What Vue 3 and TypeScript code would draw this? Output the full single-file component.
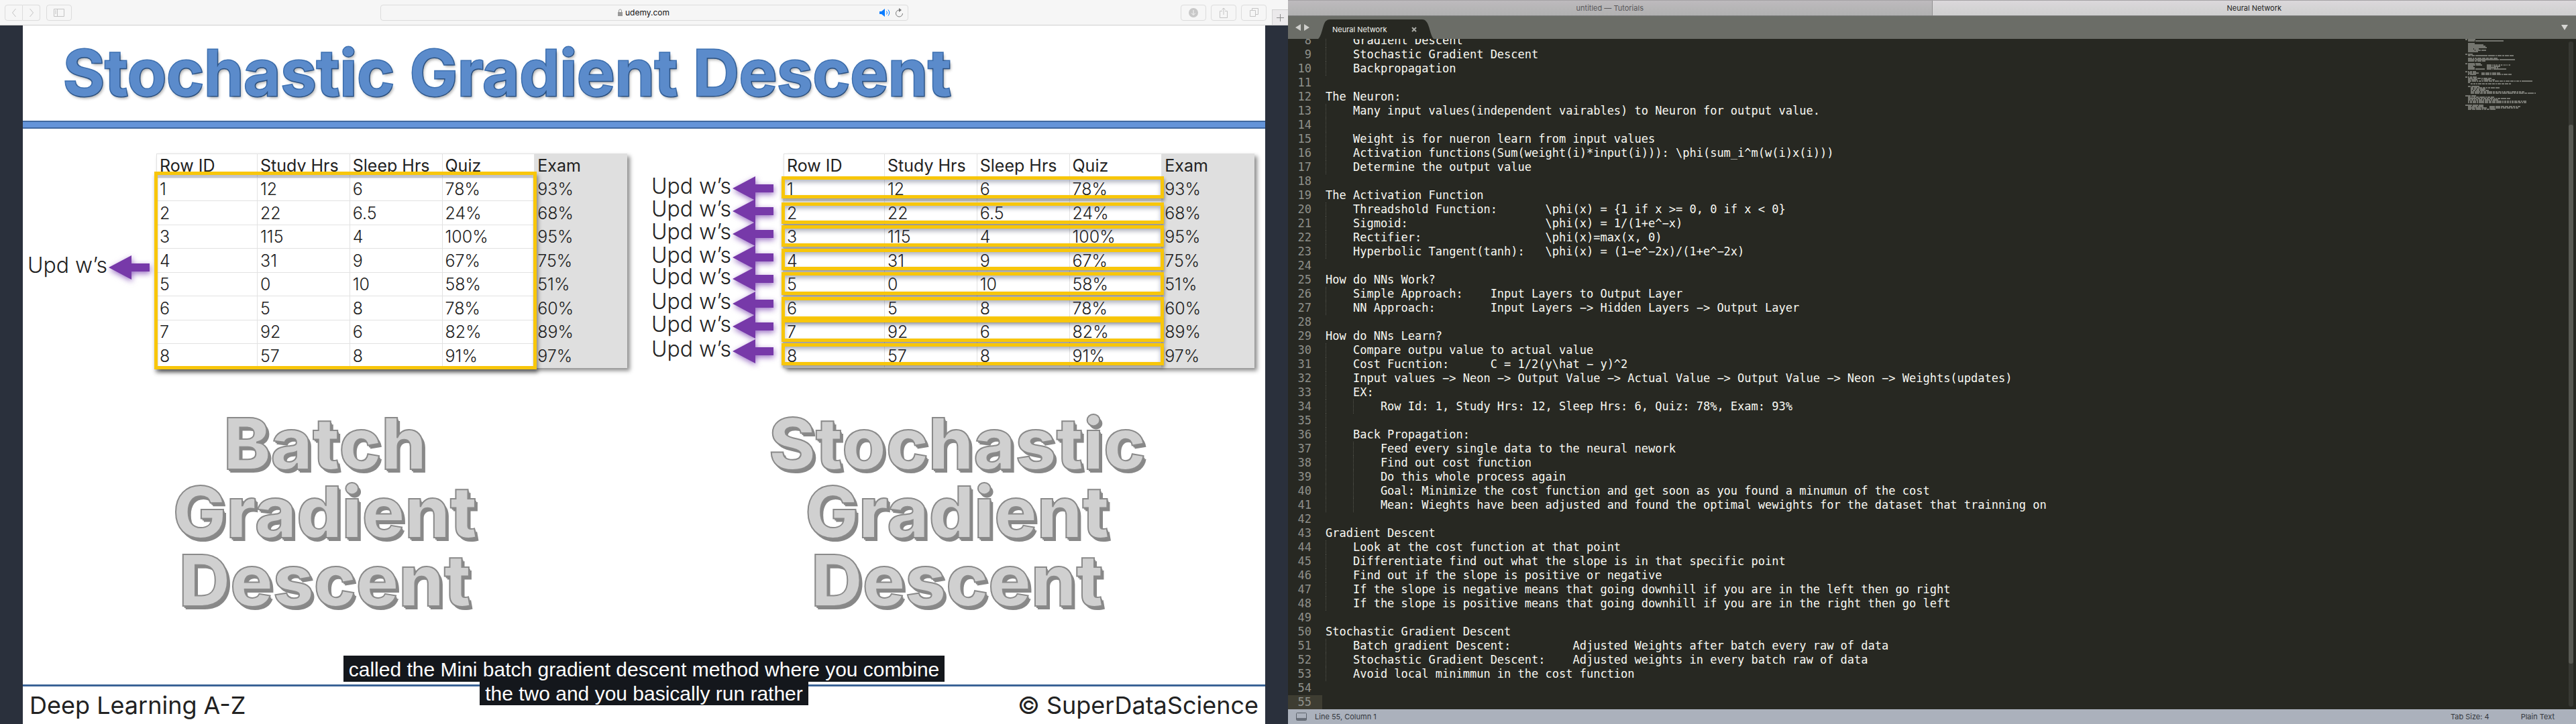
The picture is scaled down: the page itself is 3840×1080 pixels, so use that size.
<script setup lang="ts">
interface Callout { y: number }
interface Highlight { y: number; height: number }
interface Figure {
  name: string
  title: string[]
  callouts: Callout[]
  highlights: Highlight[]
}
interface CodeLine { no: number; guides: number; text: string }
interface Run { x: number; y: number; width: number }

const columns: string[] = ['Row ID', 'Study Hrs', 'Sleep Hrs', 'Quiz', 'Exam']
const rows: string[][] = [
  ['1', '12', '6', '78%', '93%'],
  ['2', '22', '6.5', '24%', '68%'],
  ['3', '115', '4', '100%', '95%'],
  ['4', '31', '9', '67%', '75%'],
  ['5', '0', '10', '58%', '51%'],
  ['6', '5', '8', '78%', '60%'],
  ['7', '92', '6', '82%', '89%'],
  ['8', '57', '8', '91%', '97%'],
]

// Positions are measured from the top of the table on the slide.
const figures: Figure[] = [
  {
    name: 'batch',
    title: ['Batch', 'Gradient', 'Descent'],
    callouts: [{ y: 170 }],
    highlights: [{ y: 27, height: 295 }],
  },
  {
    name: 'stochastic',
    title: ['Stochastic', 'Gradient', 'Descent'],
    callouts: [52, 86, 120, 155, 187, 224, 258, 295].map((y) => ({ y })),
    highlights: [
      { y: 34, height: 33 },
      { y: 73, height: 32 },
      { y: 107, height: 32 },
      { y: 142, height: 32 },
      { y: 177, height: 34 },
      { y: 214, height: 34 },
      { y: 247, height: 34 },
      { y: 283, height: 33 },
    ],
  },
]

const source = `    Gradient Descent
    Stochastic Gradient Descent
    Backpropagation

The Neuron:
    Many input values(independent vairables) to Neuron for output value.
    
    Weight is for nueron learn from input values
    Activation functions(Sum(weight(i)*input(i))): \\phi(sum_i^m(w(i)x(i)))
    Determine the output value

The Activation Function
    Threadshold Function:       \\phi(x) = {1 if x >= 0, 0 if x < 0}
    Sigmoid:                    \\phi(x) = 1/(1+e^−x)
    Rectifier:                  \\phi(x)=max(x, 0)
    Hyperbolic Tangent(tanh):   \\phi(x) = (1−e^−2x)/(1+e^−2x)

How do NNs Work?
    Simple Approach:    Input Layers to Output Layer
    NN Approach:        Input Layers −> Hidden Layers −> Output Layer

How do NNs Learn?
    Compare outpu value to actual value
    Cost Fucntion:      C = 1/2(y\\hat − y)^2
    Input values −> Neon −> Output Value −> Actual Value −> Output Value −> Neon −> Weights(updates)
    EX:
        Row Id: 1, Study Hrs: 12, Sleep Hrs: 6, Quiz: 78%, Exam: 93%
    
    Back Propagation:
        Feed every single data to the neural nework
        Find out cost function
        Do this whole process again
        Goal: Minimize the cost function and get soon as you found a minumun of the cost
        Mean: Wieghts have been adjusted and found the optimal wewights for the dataset that trainning on

Gradient Descent
    Look at the cost function at that point
    Differentiate find out what the slope is in that specific point
    Find out if the slope is positive or negative
    If the slope is negative means that going downhill if you are in the left then go right
    If the slope is positive means that going downhill if you are in the right then go left

Stochastic Gradient Descent
    Batch gradient Descent:         Adjusted Weights after batch every raw of data
    Stochastic Gradient Descent:    Adjusted weights in every batch raw of data
    Avoid local minimmun in the cost function

`
const firstLine = 8
const lines: CodeLine[] = source.split('\n').map((raw, i) => {
  const guides = Math.floor((raw.length - raw.trimStart().length) / 4)
  return { no: firstLine + i, guides, text: raw.slice(guides * 4) }
})
const activeLine = 55

// The minimap draws one pixel per character and two pixels per line.
const runsAbove: Run[] = [
  { x: 0, y: 0, width: 3 }, { x: 4, y: 0, width: 11 },
  { x: 4, y: 2, width: 10 }, { x: 15, y: 2, width: 42 },
  { x: 4, y: 6, width: 10 }, { x: 4, y: 8, width: 23 },
  { x: 4, y: 10, width: 26 }, { x: 4, y: 12, width: 28 },
]
const runsBelow: Run[] = source.split('\n').flatMap((raw, i) =>
  [...raw.matchAll(/\S+/g)].map((m) => ({
    x: m.index ?? 0,
    y: (firstLine + i - 1) * 2,
    width: m[0].length,
  })),
)
const runs: Run[] = [...runsAbove, ...runsBelow]
</script>

<template>
  <div class="desktop">
    <section class="browser">
      <header class="toolbar">
        <div class="nav">
          <button type="button" class="tool back" aria-label="Back">
            <svg width="8" height="14" viewBox="0 0 8 14"><path d="M6.500 1 1.500 7l5 6" /></svg>
          </button>
          <button type="button" class="tool forward" aria-label="Forward">
            <svg width="8" height="14" viewBox="0 0 8 14"><path d="m1.500 1 5 6-5 6" /></svg>
          </button>
          <button type="button" class="tool side" aria-label="Show sidebar">
            <svg width="16" height="12" viewBox="0 0 16 12"><path d="M.5.5h15v11H.5zM5.500.5v11M2 3h2M2 5h2M2 7h2" /></svg>
          </button>
        </div>
        <div class="address">
          <svg class="lock" width="9" height="11" viewBox="0 0 9 11"><path d="M2.500 5V3a2 2 0 0 1 4 0v2" fill="none" stroke="#999" /><rect x="1" y="5" width="7" height="6" fill="#999" /></svg>
          <input type="text" value="udemy.com" aria-label="Address" />
          <div class="address-tools">
            <svg width="17" height="12" viewBox="0 0 17 12"><path d="M0 4h3l5-4v12L3 8H0z" fill="#0a7cff" /><path d="M10.500 3.500q2 2.500 0 5M13 1.500q3.500 4.500 0 9" fill="none" stroke="#0a7cff" /></svg>
            <svg width="13" height="14" viewBox="0 0 13 14"><path d="M6 3a5 5 0 1 0 5.500 5" fill="none" stroke="#777" /><path d="M6 0l4 3-4 3z" fill="#777" /></svg>
          </div>
        </div>
        <div class="actions">
          <button type="button" class="tool" aria-label="Downloads">
            <svg width="14" height="14" viewBox="0 0 14 14"><circle cx="7" cy="7" r="7" fill="#c8c8c8" stroke="none" /><path d="M7 3v7M4 7.500l3 3 3-3" stroke="#f6f6f6" /></svg>
          </button>
          <button type="button" class="tool" aria-label="Share">
            <svg width="12" height="16" viewBox="0 0 12 16"><path d="M4 5.500H.5v10h11v-10H8M6 11V1M3.500 3.500 6 1l2.500 2.500" /></svg>
          </button>
          <button type="button" class="tool" aria-label="Show all tabs">
            <svg width="13" height="13" viewBox="0 0 13 13"><path d="M.5 3.500h8v9h-8zM3.500 3V.5h9v9H9" /></svg>
          </button>
        </div>
        <button type="button" class="new-tab" aria-label="New tab">
          <svg width="11" height="11" viewBox="0 0 11 11"><path d="M5.500 0v11M0 5.500h11" stroke="#8b8b8b" /></svg>
        </button>
      </header>

      <main class="slide">
        <h1>Stochastic Gradient Descent</h1>
        <div class="rule"></div>
        <div class="figures">
          <figure v-for="fig in figures" :key="fig.name" :class="fig.name">
            <div class="data">
              <div class="callouts">
                <div v-for="c in fig.callouts" :key="c.y" class="callout" :style="{ top: c.y + 'px' }">
                  <span>Upd w’s</span>
                  <svg width="61" height="36" viewBox="0 0 61 36"><path d="M0 18 34 0v12h27v12H34v12z" fill="#7739a9" /></svg>
                </div>
              </div>
              <div class="sheet">
                <table>
                  <thead>
                    <tr><th v-for="c in columns" :key="c" scope="col">{{ c }}</th></tr>
                  </thead>
                  <tbody>
                    <tr v-for="r in rows" :key="r[0]">
                      <td v-for="(cell, i) in r" :key="i">{{ cell }}</td>
                    </tr>
                  </tbody>
                </table>
                <div
                  v-for="h in fig.highlights"
                  :key="h.y"
                  class="highlight"
                  :style="{ top: h.y + 'px', height: h.height + 'px' }"
                ></div>
              </div>
            </div>
            <figcaption>
              <span v-for="word in fig.title" :key="word">{{ word }}</span>
            </figcaption>
          </figure>
        </div>
        <footer>
          <span>Deep Learning A-Z</span>
          <span>© SuperDataScience</span>
        </footer>
      </main>
      <div class="subtitles">
        <p>called the Mini batch gradient descent method where you combine</p>
        <p>the two and you basically run rather</p>
      </div>
    </section>

    <section class="editor">
      <nav class="window-tabs">
        <button type="button">untitled — Tutorials</button>
        <button type="button" class="current">Neural Network</button>
      </nav>
      <div class="file-tabs">
        <svg class="history" width="21" height="10" viewBox="0 0 21 10"><path d="M8 0v10L0 5zM13 0v10l8-5z" fill="#cfcfcc" /></svg>
        <div class="file-tab">
          <svg class="shape" width="172" height="29" viewBox="0 0 172 29"><path d="M0 29C6 24 7 5 12 2q2-2 5-2h138q4 0 6 3c5 5 6 21 11 26z" fill="#272822" /></svg>
          <span>Neural Network</span>
          <button type="button" aria-label="Close file">
            <svg width="8" height="8" viewBox="0 0 8 8"><path d="m1 1 6 6M7 1 1 7" stroke="#a9aaa5" stroke-width="2" /></svg>
          </button>
        </div>
        <svg class="menu" width="10" height="8" viewBox="0 0 10 8"><path d="M0 0h10L5 8z" fill="#d6d6d3" /></svg>
      </div>
      <div class="workspace">
        <div class="code">
          <div v-for="l in lines" :key="l.no" class="line" :class="{ active: l.no === activeLine }">
            <span class="number">{{ l.no }}</span>
            <code><i v-for="g in l.guides" :key="g" class="guide"></i>{{ l.text }}</code>
          </div>
        </div>
        <svg class="minimap" width="154" height="112" viewBox="0 0 154 112">
          <rect v-for="(r, i) in runs" :key="i" :x="r.x" :y="r.y" :width="r.width" height="2" />
        </svg>
        <div class="scrollbar"><div class="thumb"></div></div>
      </div>
      <footer class="status">
        <svg width="16" height="12" viewBox="0 0 16 12"><rect x=".5" y=".5" width="15" height="11" rx="1" fill="none" stroke="#5c626b" /><path d="M1 8h14v3H1z" fill="#6b717b" /></svg>
        <span class="position">Line 55, Column 1</span>
        <span>Tab Size: 4</span>
        <span>Plain Text</span>
      </footer>
    </section>
  </div>
</template>

<style>
body {
  margin: 0;
}
</style>

<style scoped>
.desktop {
  display: grid;
  grid-template-columns: 1fr 1fr;
  height: 100vh;
  overflow: hidden;
  font-family: Inter, "Liberation Sans", sans-serif;
}
button {
  margin: 0;
  padding: 0;
  border: 0;
  background: none;
  font: inherit;
}
svg {
  display: block;
  flex: none;
}

/* Browser window */
.browser {
  position: relative;
  display: flex;
  flex-direction: column;
  min-width: 0;
  background: #2a303c;
}
.toolbar {
  display: grid;
  grid-template-columns: 1fr 787px 1fr;
  align-items: center;
  position: relative;
  height: 37px;
  padding: 0 7px;
  border-bottom: 1px solid #cfcfcf;
  background: #f6f6f6;
}
.nav,
.actions {
  display: flex;
}
.actions {
  justify-content: flex-end;
  gap: 7px;
  margin-right: 25px;
}
.tool {
  display: flex;
  align-items: center;
  justify-content: center;
  box-sizing: border-box;
  width: 38px;
  height: 24px;
  border: 1px solid #dcdcdc;
  border-radius: 4px;
}
.tool svg {
  fill: none;
  stroke: #c4c4c4;
}
.back {
  width: 27px;
  border-radius: 4px 0 0 4px;
}
.forward {
  width: 26px;
  border-left: 0;
  border-radius: 0 4px 4px 0;
}
.side {
  margin-left: 9px;
}
.address {
  display: flex;
  align-items: center;
  justify-content: center;
  gap: 3px;
  position: relative;
  box-sizing: border-box;
  height: 24px;
  border: 1px solid #dcdcdc;
  border-radius: 4px;
}
.address input {
  width: 68px;
  padding: 0;
  border: 0;
  outline: 0;
  background: none;
  color: #111;
  font: 12px/20px Inter, sans-serif;
}
.address-tools {
  position: absolute;
  right: 6px;
  display: flex;
  align-items: center;
  gap: 6px;
}
.new-tab {
  position: absolute;
  right: 0;
  bottom: 0;
  display: flex;
  align-items: center;
  justify-content: center;
  box-sizing: border-box;
  width: 24px;
  height: 23px;
  border: 1px solid #d2d2d2;
  border-width: 1px 0 0 1px;
  background: #ebe9eb;
}

/* Slide */
.slide {
  display: flex;
  flex: 1;
  flex-direction: column;
  margin: 0 34px;
  background: #fff;
}
h1 {
  margin: 0;
  padding-left: 60px;
  color: #5b8bcb;
  font-size: 95px;
  font-weight: 700;
  line-height: 142px;
  white-space: nowrap;
  -webkit-text-stroke: 3px #3e72b4;
  paint-order: stroke fill;
  text-shadow: 2px 3px 4px rgba(0, 0, 0, 0.35);
}
.rule {
  height: 8px;
  border: 2px solid #40689f;
  border-width: 2px 0;
  background: #6494d9;
}
.figures {
  display: flex;
  flex: 1;
  justify-content: space-between;
  padding: 37px 5px 0 0;
}
figure {
  margin: 0;
}
.data {
  display: flex;
}
.callouts {
  position: relative;
  width: 199px;
}
.stochastic .callouts {
  width: 195px;
}
.stochastic .data {
  padding-right: 11px;
}
.callout {
  position: absolute;
  right: 15px;
  display: flex;
  align-items: center;
  height: 36px;
  margin-top: -18px;
  color: #222;
  font-size: 32px;
  font-weight: 300;
  line-height: 36px;
  white-space: nowrap;
}
.batch .callout {
  right: 10px;
}
.callout span {
  padding: 0 2px 6px 0;
}
.callout svg {
  overflow: visible;
  filter: drop-shadow(1px 3px 4px rgba(110, 50, 170, 0.7));
}
.sheet {
  position: relative;
}
table {
  width: 702px;
  border-collapse: collapse;
  table-layout: fixed;
  background: #fff;
  box-shadow: 4px 4px 6px rgba(0, 0, 0, 0.45);
  color: #222;
  font-size: 25px;
  line-height: 34px;
}
tr:nth-child(even) {
  height: 36px;
}
th,
td {
  box-sizing: border-box;
  height: 35px;
  padding: 0 0 0 4px;
  border: 1px solid #e2e2e2;
  font-weight: 300;
  text-align: left;
  white-space: nowrap;
}
th {
  font-weight: 400;
}
th:first-child {
  width: 150px;
}
th:last-child,
td:last-child {
  border-color: #dfdfdf;
  background: #dfdfdf;
}
.highlight {
  position: absolute;
  left: -3px;
  right: 135px;
  box-sizing: border-box;
  border: 5px solid #f8c60a;
  box-shadow: 1px 4px 5px rgba(0, 0, 0, 0.4), inset 0 4px 6px rgba(40, 50, 80, 0.35);
}
.batch .highlight {
  box-shadow: 2px 5px 6px rgba(0, 0, 0, 0.45), inset 0 4px 3px rgba(40, 50, 80, 0.3);
}
figcaption {
  display: flex;
  flex-direction: column;
  align-items: center;
  margin-top: 62px;
}
figcaption span {
  color: #d0d0d0;
  font-size: 106px;
  font-weight: 800;
  line-height: 102px;
  -webkit-text-stroke: 2px #8a8a8a;
  text-shadow: 1px 1px 0 #888, 2px 3px 0 #888, 4px 5px 0 #888;
}
.slide footer {
  display: flex;
  align-items: center;
  justify-content: space-between;
  height: 56px;
  padding: 0 10px;
  border-top: 3px solid #3a6396;
  color: #222;
  font-size: 36px;
  font-weight: 400;
}
.subtitles {
  position: absolute;
  bottom: 28px;
  left: 0;
  right: 0;
  display: flex;
  flex-direction: column;
  align-items: center;
}
.subtitles p {
  margin: 0;
  padding: 2px 8px 0;
  background: #14171c;
  color: #fff;
  font: 30px/37px "Liberation Sans", Arial, sans-serif;
  white-space: nowrap;
}
.subtitles p:last-child {
  padding-top: 0;
  line-height: 35px;
}

/* Editor window */
.editor {
  display: flex;
  flex-direction: column;
  min-width: 0;
  height: 100%;
  min-height: 0;
  background: #272822;
  overflow: hidden;
}
.window-tabs {
  display: flex;
  height: 22px;
  border-top: 1px solid #a5a2a5;
  border-bottom: 1px solid #7b7b7b;
}
.window-tabs button {
  flex: 1;
  background: linear-gradient(#bdbabd, #b1b1b1);
  color: #58575a;
  font-size: 11px;
}
.window-tabs .current {
  border-left: 1px solid #919091;
  background: linear-gradient(#dbd8db, #cfcfcf);
  color: #1c1c1c;
}
.file-tabs {
  display: flex;
  align-items: center;
  height: 34px;
  padding: 0 12px 0 11px;
  background: #6b6d67;
}
.file-tab {
  position: relative;
  display: flex;
  align-items: center;
  align-self: flex-end;
  box-sizing: border-box;
  width: 172px;
  height: 29px;
  margin-left: 13px;
  padding: 0 25px 0 21px;
  color: #f4f4f0;
  font-size: 11px;
}
.file-tab .shape {
  position: absolute;
  inset: 0;
}
.file-tab span,
.file-tab button {
  position: relative;
}
.file-tab button {
  margin-left: auto;
}
.menu {
  margin-left: auto;
}
.workspace {
  display: flex;
  flex: 1;
  min-height: 0;
}
.code {
  display: flex;
  flex: 1;
  flex-direction: column;
  justify-content: flex-end;
  min-width: 0;
  overflow: hidden;
  color: #f8f8f2;
  font: 17px/21px "DejaVu Sans Mono", monospace;
}
.line {
  display: flex;
  flex: none;
  height: 21px;
}
.number {
  box-sizing: border-box;
  width: 51px;
  padding-right: 16px;
  color: #8f908a;
  text-align: right;
}
.active .number {
  background: #3e3d32;
}
code {
  padding-left: 5px;
  font: inherit;
  white-space: pre;
}
.guide {
  display: inline-block;
  box-sizing: border-box;
  width: 4ch;
  height: 21px;
  border-left: 1px dotted #55564e;
  vertical-align: top;
}
.minimap {
  fill: #74756f;
}
.scrollbar {
  width: 7px;
  margin: 4px 4px 4px 0;
  border-radius: 3px;
  background: #373833;
}
.thumb {
  height: 81%;
  margin-top: 124px;
  border-radius: 3px;
  background: #585953;
}
.status {
  display: flex;
  align-items: center;
  height: 22px;
  padding: 0 32px 0 12px;
  background: #abb1bc;
  color: #33373d;
  font-size: 11px;
}
.position {
  margin: 0 auto 0 12px;
}
.status span:last-child {
  margin-left: 47px;
}
</style>
